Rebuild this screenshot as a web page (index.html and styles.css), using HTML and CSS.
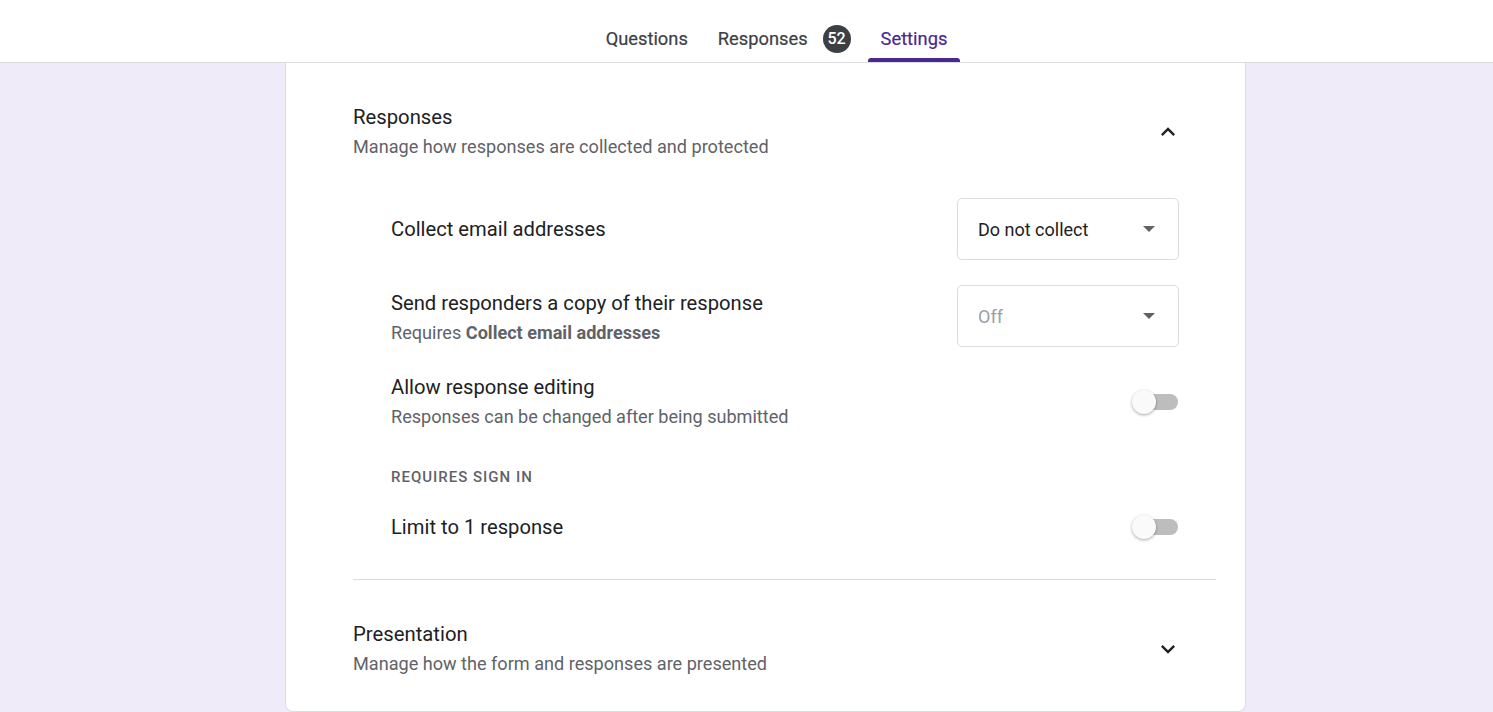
FILE: index.html
```html
<!DOCTYPE html>
<html lang="en">
<head>
<meta charset="utf-8">
<title>Settings</title>
<link rel="stylesheet" href="styles.css">
</head>
<body>
<header class="topbar">
  <nav class="tabs">
    <a class="tab">Questions</a>
    <a class="tab">Responses <span class="badge">52</span></a>
    <a class="tab active">Settings</a>
  </nav>
</header>
<main class="page">
  <section class="card">
    <div class="sec-head">
      <div>
        <div class="sec-title">Responses</div>
        <div class="sec-sub">Manage how responses are collected and protected</div>
      </div>
      <svg class="chev" viewBox="0 0 24 24" width="28" height="28"><path d="M12 8l-6 6 1.41 1.41L12 10.83l4.59 4.58L18 14z" fill="#202124"/></svg>
    </div>
    <div class="items">
      <div class="row r1">
        <div class="txt"><div class="it-title">Collect email addresses</div></div>
        <div class="select"><span>Do not collect</span><span class="arrow"></span></div>
      </div>
      <div class="row r2">
        <div class="txt">
          <div class="it-title">Send responders a copy of their response</div>
          <div class="it-sub">Requires <b>Collect email addresses</b></div>
        </div>
        <div class="select disabled"><span>Off</span><span class="arrow"></span></div>
      </div>
      <div class="row r3">
        <div class="txt">
          <div class="it-title">Allow response editing</div>
          <div class="it-sub">Responses can be changed after being submitted</div>
        </div>
        <div class="toggle"><span class="track"></span><span class="thumb"></span></div>
      </div>
      <div class="label">REQUIRES SIGN IN</div>
      <div class="row r4">
        <div class="txt"><div class="it-title">Limit to 1 response</div></div>
        <div class="toggle"><span class="track"></span><span class="thumb"></span></div>
      </div>
    </div>
    <hr class="divider">
    <div class="sec-head sec2">
      <div>
        <div class="sec-title">Presentation</div>
        <div class="sec-sub">Manage how the form and responses are presented</div>
      </div>
      <svg class="chev" viewBox="0 0 24 24" width="28" height="28"><path d="M16.59 8.59L12 13.17 7.41 8.59 6 10l6 6 6-6z" fill="#202124"/></svg>
    </div>
  </section>
</main>
</body>
</html>
```

FILE: styles.css
```css
html, body {
  margin: 0;
  padding: 0;
}
body {
  font-family: Roboto, "Liberation Sans", Arial, sans-serif;
  background: #f0ebf8;
  height: 712px;
  overflow: hidden;
  color: #202124;
}
.topbar {
  height: 62px;
  background: #fff;
  border-bottom: 1px solid #dadce0;
  display: flex;
  justify-content: center;
  align-items: stretch;
  padding-left: 60px;
  box-sizing: content-box;
}
.tabs {
  display: flex;
  gap: 4px;
  align-items: stretch;
}
.tab {
  display: flex;
  align-items: center;
  padding: 15px 13px 0 13px;
  font-size: 18.3px;
  font-weight: 400;
  color: #3c4043;
  position: relative;
  cursor: pointer;
  -webkit-text-stroke: 0.2px currentColor;
}
.tab.active {
  color: #4b2791;
}
.tab.active::after {
  content: "";
  position: absolute;
  left: 0;
  right: 0;
  bottom: 0;
  height: 4px;
  background: #4b2791;
  border-radius: 3px 3px 0 0;
}
.badge {
  display: inline-flex;
  align-items: center;
  justify-content: center;
  width: 28px;
  height: 28px;
  border-radius: 50%;
  background: #3c4043;
  color: #fff;
  font-size: 16px;
  font-weight: 500;
  margin-left: 15px;
  -webkit-text-stroke: 0;
}
.page {
  padding: 0 247px 0 285px;
}
.card {
  background: #fff;
  border: 1px solid #dadce0;
  border-top: none;
  border-radius: 0 0 8px 8px;
  padding: 42px 29px 35px 67px;
}
.sec-head {
  display: flex;
  justify-content: space-between;
  align-items: center;
  padding-right: 34px;
}
.sec-title {
  font-size: 20.3px;
  line-height: 24px;
  color: #202124;
}
.sec-sub {
  font-size: 18.1px;
  line-height: 24px;
  margin-top: 6px;
  color: #5f6368;
}
.chev {
  display: block;
}
.items {
  padding: 0 37px 0 38px;
  margin-top: 39px;
}
.row {
  display: flex;
  justify-content: space-between;
  align-items: center;
}
.r1, .r2 {
  height: 62px;
}
.r2 {
  margin-top: 25px;
}
.r2 .txt {
  padding-top: 3px;
}
.r3 {
  margin-top: 28px;
}
.r4 {
  height: 48px;
  margin-top: 16px;
}
.it-title {
  font-size: 20.2px;
  line-height: 24px;
  color: #202124;
}
.it-sub {
  font-size: 18.1px;
  line-height: 24px;
  margin-top: 6px;
  color: #5f6368;
}
.it-sub b {
  font-weight: 700;
}
.select {
  width: 222px;
  height: 62px;
  box-sizing: border-box;
  border: 1px solid #dadce0;
  border-radius: 5px;
  padding: 0 23px 0 20px;
  display: flex;
  justify-content: space-between;
  align-items: center;
  font-size: 18px;
  color: #202124;
}
.select.disabled {
  color: #9aa0a6;
}
.arrow {
  width: 0;
  height: 0;
  border-left: 6px solid transparent;
  border-right: 6px solid transparent;
  border-top: 6px solid #5f6368;
}
.toggle {
  position: relative;
  width: 46px;
  height: 25px;
  margin-right: 1px;
}
.track {
  position: absolute;
  right: 0;
  top: 4px;
  width: 41px;
  height: 16px;
  border-radius: 8px;
  background: #bdbdbd;
}
.thumb {
  position: absolute;
  left: 0;
  top: 0;
  width: 24px;
  height: 24px;
  border-radius: 50%;
  background: #fafafa;
  box-shadow: 0 1px 3px rgba(0,0,0,0.35);
}
.label {
  margin-top: 38px;
  font-size: 15px;
  line-height: 20px;
  font-weight: 500;
  letter-spacing: 1px;
  color: #5f6368;
}
.divider {
  border: none;
  border-top: 1px solid #dadce0;
  margin: 28px 0 0 0;
}
.sec2 {
  margin-top: 42px;
}
```
